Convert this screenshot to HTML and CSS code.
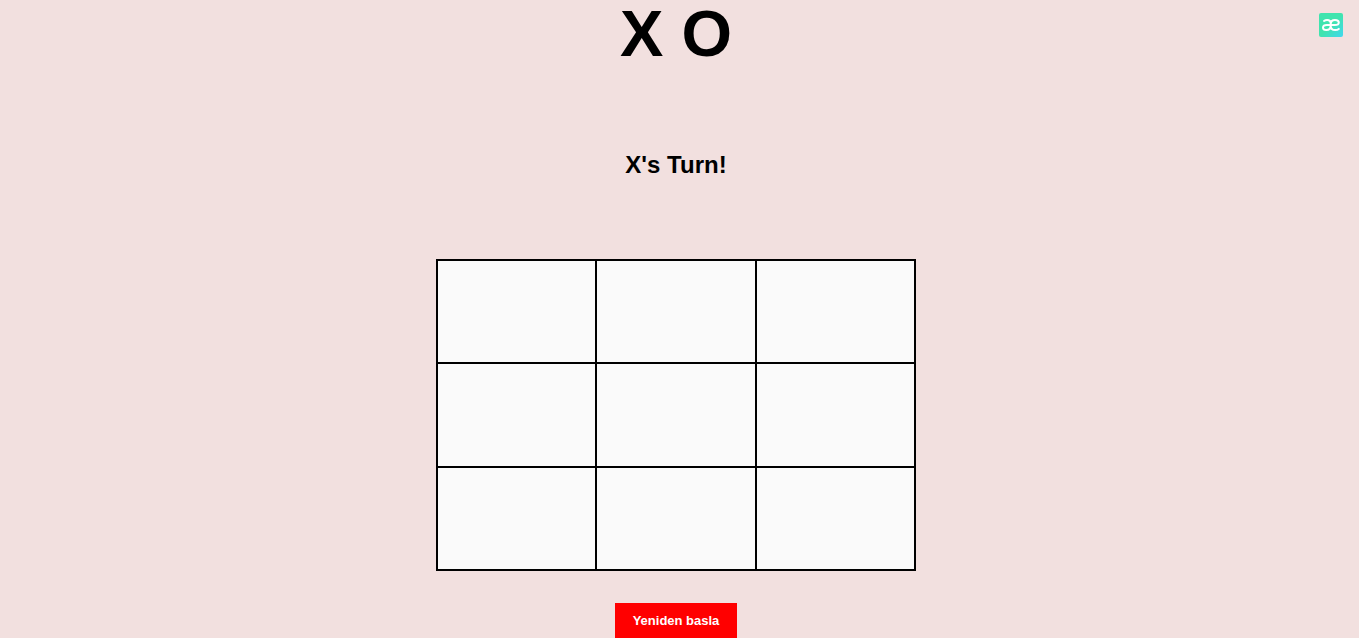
FILE: index.html
```html
<!DOCTYPE html>
<html lang="en">
<head>
<meta charset="utf-8">
<title>X O</title>
<link rel="stylesheet" href="styles.css">
</head>
<body>
<a class="badge" href="#" aria-label="Home">
<svg class="badge-icon" viewBox="0 0 24 24" aria-hidden="true">
<defs><linearGradient id="mint" x1="0" y1="0" x2="1" y2="1"><stop offset="0.5" stop-color="#40e4ae"/><stop offset="1" stop-color="#40d8f0"/></linearGradient></defs>
<rect width="24" height="24" rx="2" fill="url(#mint)"/>
<path d="M5 8C6 7.2 7 6.9 8.2 6.9c2.3 0 3.5 1.3 3.5 3.5v2.6c0 2.7 1.7 4.1 4.5 4.1 1.4 0 2.7-.4 3.6-1.2M11.7 11.9H7.7c-2.4 0-3.7.9-3.7 2.6s1.3 2.6 3.2 2.6c2.8 0 4.5-1.6 4.5-4.5v-1.3c0-2.7 1.7-4.4 4.3-4.4 2.3 0 3.8 1 3.8 2.5s-1.5 2.5-4 2.5h-4.1" fill="none" stroke="#fff" stroke-width="2" stroke-linecap="round" stroke-linejoin="round"/>
</svg>
</a>
<main class="game">
<h1 class="title">X O</h1>
<h2 class="status">X's Turn!</h2>
<div class="board">
<button class="cell" type="button" aria-label="Cell 1"></button>
<button class="cell" type="button" aria-label="Cell 2"></button>
<button class="cell" type="button" aria-label="Cell 3"></button>
<button class="cell" type="button" aria-label="Cell 4"></button>
<button class="cell" type="button" aria-label="Cell 5"></button>
<button class="cell" type="button" aria-label="Cell 6"></button>
<button class="cell" type="button" aria-label="Cell 7"></button>
<button class="cell" type="button" aria-label="Cell 8"></button>
<button class="cell" type="button" aria-label="Cell 9"></button>
</div>
<button class="restart" type="button">Yeniden basla</button>
</main>
</body>
</html>
```

FILE: styles.css
```css
* {
  box-sizing: border-box;
}

body {
  margin: 0;
  background: #f2e0df;
  color: #000;
  font-family: "Liberation Sans", Arial, sans-serif;
}

.game {
  display: flex;
  flex-direction: column;
  align-items: center;
  padding-right: 7px;
}

.title {
  margin: 0;
  font-size: 65px;
  line-height: 68px;
}

.status {
  margin: 82px 0 80px;
  font-size: 24px;
  line-height: 29px;
}

.board {
  display: grid;
  grid-template-columns: repeat(3, 1fr);
  grid-auto-rows: 1fr;
  gap: 2px;
  width: 100%;
  max-width: 480px;
  height: 312px;
  padding: 2px;
  background: #000;
}

.cell {
  border: 0;
  border-radius: 0;
  background: #fafafa;
}

.restart {
  margin-top: 32px;
  padding: 10px 18px;
  border: 0;
  background: #f00;
  color: #fff;
  font-family: inherit;
  font-size: 13px;
  font-weight: bold;
  line-height: 15px;
}

.badge {
  position: absolute;
  top: 13px;
  right: 16px;
}

.badge-icon {
  display: block;
  width: 24px;
  height: 24px;
}
```
